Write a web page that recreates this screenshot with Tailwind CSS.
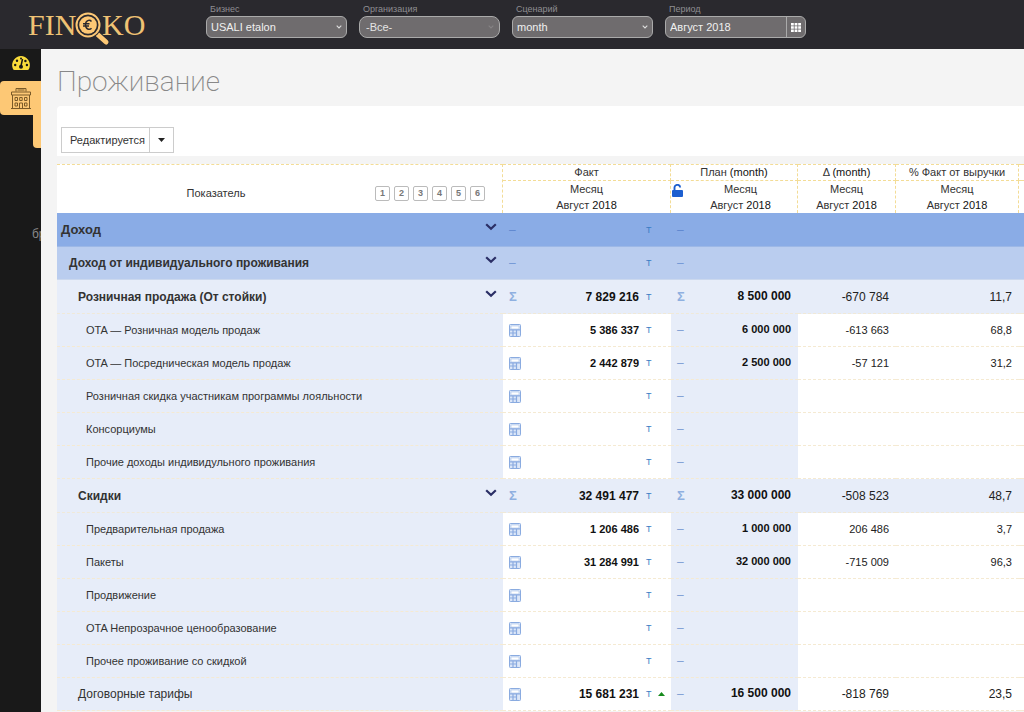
<!DOCTYPE html>
<html lang="ru">
<head>
<meta charset="utf-8">
<title>Finoko — Проживание</title>
<script src="https://cdn.jsdelivr.net/npm/@tailwindcss/browser@4"></script>
</head>
<body class="flex h-screen flex-col overflow-hidden bg-[#f4f4f4] font-['Liberation_Sans',Arial,sans-serif] text-[11px] text-[#444]">
<svg class="hidden" aria-hidden="true">
  <symbol id="calc" viewBox="0 0 12 13"><rect x="0.5" y="0.5" width="11" height="12" rx="0.8" fill="#dbe6f8" stroke="#8aabe0"/><path d="M2 2h8v3H2z" fill="#fff" stroke="#a9c3ea" stroke-width=".6"/><path d="M0.5 5.800h11M4 6v6.500M7.500 6v6.500M1 9h6.500" stroke="#8aabe0" stroke-width="1.200" fill="none"/></symbol>
  <symbol id="chev" viewBox="0 0 12 8"><path d="M1.200 1.200 6 5.800l4.800-4.600" fill="none" stroke="#2b2f66" stroke-width="2.200"/></symbol>
  <symbol id="down" viewBox="0 0 6 4"><path d="M.7.7 3 3 5.300.7" fill="none" stroke="#ddd" stroke-width="1.100"/></symbol>
</svg>

<header class="flex h-[49px] shrink-0 items-start bg-[#2a292e]">
  <a href="#" aria-label="Finoko" class="w-[206px] shrink-0">
    <svg class="h-[49px] w-[160px]" viewBox="0 0 160 49" fill="#efc274" font-family="Liberation Serif, serif" font-size="30">
      <text x="28" y="35">FIN</text><text x="102" y="35">KO</text>
      <path d="m95 34 10 9" stroke="#2a292e" stroke-width="8"/>
      <path d="m96 33 10 9" stroke="#fdc875" stroke-width="5" stroke-linecap="round"/>
      <circle cx="88" cy="25" r="13.500" fill="#2a292e"/>
      <circle cx="88" cy="25" r="11.500" fill="none" stroke="#fdc875" stroke-width="2"/>
      <circle cx="88" cy="25" r="8.800" fill="#fdc875"/>
      <path d="M91.500 21.500c-2-2.200-6-1.200-6 3.300s4 5.600 6 3.400M83 23.800h6.500M83 26h6" fill="none" stroke="#2a292e" stroke-width="1.500"/>
    </svg>
  </a>
  <div class="flex gap-3 pt-[3px] text-[#b4b3b6]">
    <div class="w-[141px]"><label for="biz" class="block h-[13px] pl-1 text-[9px] leading-[13px] text-[#8f8e92]">Бизнес</label>
      <div class="relative"><select id="biz" class="block h-[22px] w-full appearance-none rounded-md border border-[#aaa] bg-[#6f6c6e] px-1 text-[11px] text-[#f0f0f0]"><option>USALI etalon</option></select><svg class="pointer-events-none absolute top-[9px] right-[5px] h-1 w-1.5"><use href="#down"/></svg></div></div>
    <div class="w-[141px]"><label for="org" class="block h-[13px] pl-1 text-[9px] leading-[13px] text-[#8f8e92]">Организация</label>
      <div class="relative"><select id="org" class="block h-[22px] w-full appearance-none rounded-lg border border-[#aaa] bg-[#6f6c6e] px-1.5 text-[11px] text-[#e4e4e4]"><option>-Все-</option></select><svg class="pointer-events-none absolute top-[9px] right-[6px] h-1 w-1.5 opacity-20"><use href="#down"/></svg></div></div>
    <div class="w-[141px]"><label for="scn" class="block h-[13px] pl-1 text-[9px] leading-[13px] text-[#8f8e92]">Сценарий</label>
      <div class="relative"><select id="scn" class="block h-[22px] w-full appearance-none rounded-md border border-[#aaa] bg-[#6f6c6e] px-1 text-[11px] text-[#f0f0f0]"><option>month</option></select><svg class="pointer-events-none absolute top-[9px] right-[5px] h-1 w-1.5"><use href="#down"/></svg></div></div>
    <div class="w-[141px]"><label for="per" class="block h-[13px] pl-1 text-[9px] leading-[13px] text-[#8f8e92]">Период</label>
      <div class="flex h-[22px] overflow-hidden rounded-md border border-[#aaa] bg-[#6f6c6e]"><input id="per" value="Август 2018" class="w-0 flex-1 px-1 text-[11px] text-[#f0f0f0]"><button aria-label="Календарь" class="flex w-[19px] items-center justify-center border-l border-[#aaa]"><svg class="h-[9px] w-[10px]" viewBox="0 0 10 9" fill="#fff"><path d="M0 0h2.800v2.400H0zM3.600 0h2.800v2.400H3.600zM7.200 0H10v2.400H7.200zM0 3.300h2.800v2.400H0zM3.600 3.300h2.800v2.400H3.600zM7.200 3.300H10v2.400H7.200zM0 6.600h2.800V9H0zM3.600 6.600h2.800V9H3.600zM7.200 6.600H10V9H7.200z"/></svg></button></div></div>
  </div>
</header>

<div class="flex min-h-0 flex-1">
  <nav class="flex w-[41px] shrink-0 flex-col items-end overflow-hidden bg-[#191919]">
    <a href="#" aria-label="Панель" class="flex h-8 w-full items-center justify-center pb-1">
      <svg class="h-4 w-[18px]" viewBox="0 0 18 16"><path d="M9 1a9 9 0 0 1 8.500 11.500c-.3 1.700-1 2.500-2 2.500h-13c-1 0-1.700-.8-2-2.500A9 9 0 0 1 9 1z" fill="#fadc3a"/><path d="M10.500 4 9 11" stroke="#191919" stroke-width="1.500"/><circle cx="9" cy="11.800" r="2" fill="#191919"/><g fill="#191919"><circle cx="3.200" cy="10" r="1.200"/><circle cx="5" cy="5.800" r="1.200"/><circle cx="9" cy="3.600" r="1"/><circle cx="13.400" cy="6" r="1.200"/><circle cx="14.900" cy="10" r="1.200"/></g></svg>
    </a>
    <a href="#" aria-label="Отель" class="flex h-[34px] w-full items-center justify-center rounded-l bg-[#fdc875]">
      <svg class="h-[21px] w-5" viewBox="0 0 20 21" fill="none" stroke="#7a5a28"><path d="M5 3.500v-3h10v3M6.500 2h7" /><path d="M.5 4h19v3H.5zM1.500 7v13.500h17V7M0 20.500h20"/><path d="M4 9.500h2.500v3H4zM8.700 9.500h2.500v3H8.700zM13.500 9.500H16v3h-2.500zM4 15h2.500v3H4zM13.500 15H16v3h-2.500zM8.500 20.500V15h3v5.500"/></svg>
    </a>
    <span class="h-[33px] w-2 rounded-bl bg-[#fdc875]"></span>
    <a href="#" class="mt-[78px] w-[9px] text-[12px] leading-4 whitespace-nowrap text-[#8a8a8a]">бр</a>
  </nav>

  <main class="flex min-w-0 flex-1 flex-col overflow-hidden pl-4">
    <h1 class="h-[57px] pt-[13px] font-['Roboto',sans-serif] text-[28px] leading-10 font-extralight text-[#888]">Проживание</h1>
    <section class="flex h-[50px] shrink-0 items-end rounded-tl bg-white pb-[3px] pl-1">
      <div class="flex h-[26px] border border-[#ccc] bg-white text-[#333]"><button class="pr-1 pl-2">Редактируется</button><button aria-label="Другие действия" class="flex w-6 items-center justify-center border-l border-[#ccc]"><svg class="h-1 w-[7px]" viewBox="0 0 7 4"><path d="M0 0h7L3.500 4z" fill="#222"/></svg></button></div>
    </section>
    <table class="mt-2 w-full table-fixed border-separate border-spacing-0">
      <colgroup><col class="w-[446px]"><col class="w-[168px]"><col class="w-[127px]"><col class="w-[98px]"><col><col class="w-[5px]"></colgroup>
      <thead class="bg-white text-[#333] [&_th]:border-dashed [&_th]:border-[#f3dc96] [&_th]:p-0 [&_th]:font-normal">
        <tr class="h-[17px] leading-[15px]">
          <th rowspan="2" class="border-t border-r"><div class="flex items-center pt-2 pr-[17px]"><span class="flex-1 text-center">Показатель</span><div class="flex gap-1" id="levels"></div></div></th>
          <th class="border-t border-r border-b">Факт</th><th class="border-t border-r border-b">План <span class="text-[#111]">(month)</span></th><th class="border-t border-r border-b">Δ <span class="text-[#111]">(month)</span></th><th class="border-t border-r border-b">% Факт от выручки</th><th class="border-t border-b"></th>
        </tr>
        <tr class="h-8 leading-4">
          <th class="border-r">Месяц<br>Август <span class="text-[#111]">2018</span></th>
          <th class="border-r"><div class="flex items-start"><svg class="mt-[3px] h-[13px] w-[13px]" viewBox="0 0 13 13"><path d="M3.500 7V4a2.800 2.800 0 0 1 5.700-.5" fill="none" stroke="#1c5fd0" stroke-width="1.900"/><rect x="1" y="6" width="11" height="7" rx="1" fill="#1c5fd0"/></svg><div class="flex-1">Месяц<br>Август <span class="text-[#111]">2018</span></div></div></th>
          <th class="border-r">Месяц<br>Август <span class="text-[#111]">2018</span></th>
          <th class="border-r">Месяц<br>Август <span class="text-[#111]">2018</span></th><th></th>
        </tr>
      </thead>
      <tbody id="rows" class="[&_td]:p-0 [&_th]:p-0"></tbody>
    </table>
  </main>
</div>
<script>
document.getElementById('levels').innerHTML = [1,2,3,4,5,6].map(n =>
  `<button class="h-[15px] w-[15px] rounded-xs border border-[#bbb] text-[9px] leading-[13px] font-bold text-[#777]">${n}</button>`).join('');

// kind, name, fact, plan, delta, share of revenue
const rows = [
  ['top', 'Доход'],
  ['sub', 'Доход от индивидуального проживания'],
  ['group', 'Розничная продажа (От стойки)', '7 829 216', '8 500 000', '-670 784', '11,7'],
  ['item', 'OTA — Розничная модель продаж', '5 386 337', '6 000 000', '-613 663', '68,8'],
  ['item', 'OTA — Посредническая модель продаж', '2 442 879', '2 500 000', '-57 121', '31,2'],
  ['item', 'Розничная скидка участникам программы лояльности'],
  ['item', 'Консорциумы'],
  ['item', 'Прочие доходы индивидульного проживания'],
  ['group', 'Скидки', '32 491 477', '33 000 000', '-508 523', '48,7'],
  ['item', 'Предварительная продажа', '1 206 486', '1 000 000', '206 486', '3,7'],
  ['item', 'Пакеты', '31 284 991', '32 000 000', '-715 009', '96,3'],
  ['item', 'Продвижение'],
  ['item', 'OTA Непрозрачное ценообразование'],
  ['item', 'Прочее проживание со скидкой'],
  ['last', 'Договорные тарифы', '15 681 231', '16 500 000', '-818 769', '23,5'],
];
const style = {
  top:   {row: 'h-[34px] bg-[#8aace6]', name: 'pl-1 text-[13px] font-bold', num: 'text-[12px]', line: 'border-b border-[#9db8e6]', dash: 'text-[#5f87cf]'},
  sub:   {row: 'h-[33px] bg-[#bacdef]', name: 'pl-3 text-[12px] font-bold', num: 'text-[12px]', line: 'border-b border-[#cbd8ee]', dash: 'text-[#7398d6]'},
  group: {row: 'h-[34px] bg-[#e7edf9]', name: 'pl-[21px] text-[12px] font-bold', num: 'text-[12px]', line: 'border-b border-dashed border-[#f0e9d8]', dash: ''},
  item:  {row: 'h-[33px] bg-white', name: 'pl-[29px] text-[11px]', num: 'text-[11px]', line: 'border-b border-dashed border-[#f5ead2]', dash: 'text-[#7f9fd4]'},
  last:  {row: 'h-[33px] bg-white', name: 'pl-[21px] text-[12px]', num: 'text-[12px]', line: 'border-b border-dashed border-[#f5ead2]', dash: 'text-[#7f9fd4]'},
};
const sigma = '<span class="text-[13px] font-bold text-[#8fb0e0]">Σ</span>';
document.getElementById('rows').innerHTML = rows.map(([kind, name, fact = '', plan = '', delta = '', share = '']) => {
  const s = style[kind];
  const leaf = kind === 'item' || kind === 'last';
  const fill = leaf ? 'bg-[#e7edf9]' : '';
  const dash = `<span class="text-[12px] ${s.dash}">–</span>`;
  const mark = leaf ? '<svg class="h-[13px] w-3"><use href="#calc"/></svg>' : kind === 'group' ? sigma : dash;
  const up = kind === 'last' ? '<svg class="ml-1.5 h-1 w-[7px]" viewBox="0 0 7 4"><path d="M0 4h7L3.500 0z" fill="#168a1c"/></svg>' : '<span class="ml-1.5 w-[7px]"></span>';
  return `<tr class="${s.row}">
    <th scope="row" class="${s.line} ${fill} text-left font-normal"><div class="flex items-center pr-1.5 text-[#333] ${s.name}"><span class="flex-1">${name}</span>${leaf ? '' : '<button aria-label="Свернуть" class="mb-1.5"><svg class="h-2 w-3"><use href="#chev"/></svg></button>'}</div></th>
    <td class="${s.line}"><div class="flex items-center pr-1.5 pl-1.5"><span class="flex-1">${mark}</span><span class="font-bold text-[#111] ${s.num}">${fact}</span><span class="ml-[7px] w-1.5 pt-0.5 text-[9px] text-[#3b7cc4]">Т</span>${up}</div></td>
    <td class="${s.line} ${fill}"><div class="flex items-center pr-[7px] pl-1.5"><span class="flex-1">${kind === 'group' ? sigma : dash}</span><span class="pb-0.5 font-bold text-[#111] ${s.num}">${plan}</span></div></td>
    <td class="${s.line} text-right text-[#222] ${s.num}"><div class="pr-[7px]">${delta}</div></td>
    <td class="${s.line} text-right text-[#222] ${s.num}"><div class="pr-[7px]">${share}</div></td>
    <td class="${s.line}"></td></tr>`;
}).join('');
</script>
</body>
</html>
